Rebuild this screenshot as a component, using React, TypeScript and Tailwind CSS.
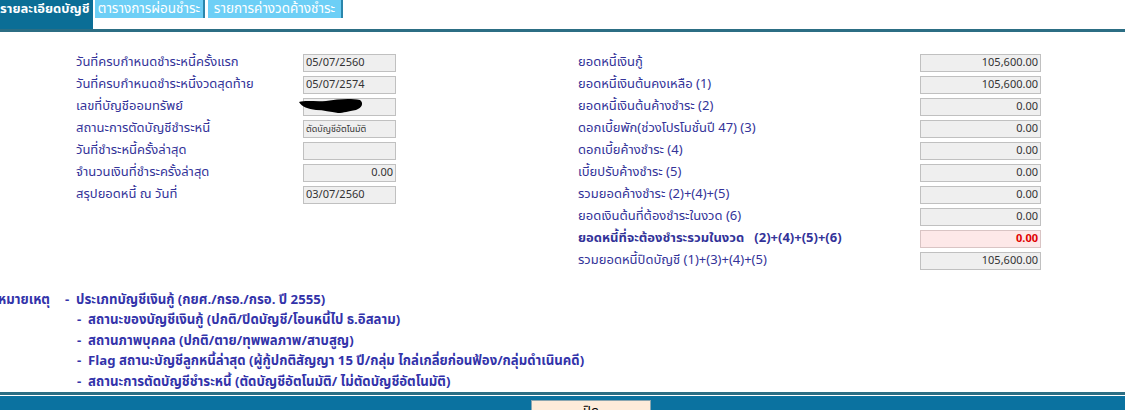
import React from 'react';

const leftRows: {label: string; value: string; align?: 'left' | 'right'; small?: boolean; redacted?: boolean}[] = [
  {label: 'วันที่ครบกำหนดชำระหนี้ครั้งแรก', value: '05/07/2560'},
  {label: 'วันที่ครบกำหนดชำระหนี้งวดสุดท้าย', value: '05/07/2574'},
  {label: 'เลขที่บัญชีออมทรัพย์', value: '', redacted: true},
  {label: 'สถานะการตัดบัญชีชำระหนี้', value: 'ตัดบัญชีอัตโนมัติ', small: true},
  {label: 'วันที่ชำระหนี้ครั้งล่าสุด', value: ''},
  {label: 'จำนวนเงินที่ชำระครั้งล่าสุด', value: '0.00', align: 'right'},
  {label: 'สรุปยอดหนี้ ณ วันที่', value: '03/07/2560'},
];

const rightRows: {label: string; value: string; highlight?: boolean}[] = [
  {label: 'ยอดหนี้เงินกู้', value: '105,600.00'},
  {label: 'ยอดหนี้เงินต้นคงเหลือ (1)', value: '105,600.00'},
  {label: 'ยอดหนี้เงินต้นค้างชำระ (2)', value: '0.00'},
  {label: 'ดอกเบี้ยพัก(ช่วงโปรโมชั่นปี 47) (3)', value: '0.00'},
  {label: 'ดอกเบี้ยค้างชำระ (4)', value: '0.00'},
  {label: 'เบี้ยปรับค้างชำระ (5)', value: '0.00'},
  {label: 'รวมยอดค้างชำระ (2)+(4)+(5)', value: '0.00'},
  {label: 'ยอดเงินต้นที่ต้องชำระในงวด (6)', value: '0.00'},
  {label: 'ยอดหนี้ที่จะต้องชำระรวมในงวด\u00a0\u00a0 (2)+(4)+(5)+(6)', value: '0.00', highlight: true},
  {label: 'รวมยอดหนี้ปิดบัญชี (1)+(3)+(4)+(5)', value: '105,600.00'},
];

const notes = [
  'สถานะของบัญชีเงินกู้ (ปกติ/ปิดบัญชี/โอนหนี้ไป ธ.อิสลาม)',
  'สถานภาพบุคคล (ปกติ/ตาย/ทุพพลภาพ/สาบสูญ)',
  'Flag สถานะบัญชีลูกหนี้ล่าสุด (ผู้กู้ปกติสัญญา 15 ปี/กลุ่ม ไกล่เกลี่ยก่อนฟ้อง/กลุ่มดำเนินคดี)',
  'สถานะการตัดบัญชีชำระหนี้ (ตัดบัญชีอัตโนมัติ/ ไม่ตัดบัญชีอัตโนมัติ)',
];

const font = "font-['Tahoma','Noto_Sans_Thai','Liberation_Sans',sans-serif]";

export default function App() {
  return (
    <div className={`w-[1125px] h-[410px] overflow-hidden bg-white ${font} flex flex-col`}>
      {/* tabs */}
      <div className="flex h-[29px] items-start">
        <div className="h-[29px] w-[93px] bg-[#0b6e96] text-white font-bold text-[13px] leading-[18px] whitespace-nowrap overflow-hidden">
          รายละเอียดบัญชี
        </div>
        <div className="h-[18px] w-[110px] ml-[2px] bg-[#6dcff6] border-r-2 border-[#2b86ab] text-white text-[13.5px] leading-[18px] whitespace-nowrap text-center">
          ตารางการผ่อนชำระ
        </div>
        <div className="h-[18px] w-[135px] ml-[3px] bg-[#6dcff6] border-r-2 border-[#2b86ab] text-white text-[13.5px] leading-[18px] whitespace-nowrap text-center">
          รายการค่างวดค้างชำระ
        </div>
      </div>
      <div className="h-[3px] bg-[#2c6e84]" />

      {/* body */}
      <div className="flex pt-[20px]">
        <div className="w-[578px] pl-[76px] flex flex-col">
          {leftRows.map((r) => (
            <div key={r.label} className="flex items-center h-[22px]">
              <span className="w-[227px] text-[13px] text-[#333399] whitespace-nowrap">{r.label}</span>
              <div
                className={`relative w-[93px] h-[18px] bg-[#efefef] border border-[#c0c0c0] px-[2px] leading-[16px] text-[#333] whitespace-nowrap overflow-visible ${
                  r.align === 'right' ? 'text-right' : 'text-left'
                } ${r.small ? 'text-[9px]' : 'text-[11px]'}`}
              >
                {r.redacted ? (
                  <svg className="absolute left-[-6px] top-[-2px]" width="70" height="20" viewBox="0 0 70 20">
                    <path
                      d="M1 5 C8 3 18 5 28 4 C40 2 52 1 62 3 C66 6 64 11 58 13 C50 14 46 16 40 16 C32 15 26 13 18 13 C10 12 4 10 1 5 Z"
                      fill="#000"
                    />
                  </svg>
                ) : (
                  r.value
                )}
              </div>
            </div>
          ))}
        </div>
        <div className="flex flex-col">
          {rightRows.map((r) => (
            <div key={r.label} className="flex items-center h-[22px]">
              <span
                className={`w-[342px] text-[13px] text-[#333399] whitespace-nowrap ${r.highlight ? 'font-bold' : ''}`}
              >
                {r.label}
              </span>
              <div
                className={`w-[121px] h-[18px] border px-[2px] text-[11px] leading-[16px] text-right whitespace-nowrap ${
                  r.highlight
                    ? 'bg-[#fde8e8] border-[#d9c4c4] text-[#e00000] font-bold'
                    : 'bg-[#efefef] border-[#c0c0c0] text-[#333]'
                }`}
              >
                {r.value}
              </div>
            </div>
          ))}
        </div>
      </div>

      {/* notes */}
      <div className="mt-[18px] flex flex-col text-[13.2px] font-bold text-[#3333aa] leading-[20.5px]">
        <div className="flex whitespace-nowrap">
          <span className="w-[67px] -ml-[2px]">หมายเหตุ</span>
          <span>-&nbsp; ประเภทบัญชีเงินกู้ (กยศ./กรอ./กรอ. ปี 2555)</span>
        </div>
        {notes.map((n) => (
          <div key={n} className="pl-[77px] whitespace-nowrap">
            -&nbsp; {n}
          </div>
        ))}
      </div>

      {/* bottom bar */}
      <div className="mt-auto h-[3px] bg-[#2c6e84] shrink-0" />
      <div className="h-[1px] bg-white shrink-0" />
      <div className="flex-1 bg-[#0b72a0] flex pl-[531px] pt-[4px] min-h-[14px]">
        <button className="w-[120px] h-[22px] bg-[#fdebd9] border border-[#8aa6b0] text-[13px] text-black leading-[18px]">
          ปิด
        </button>
      </div>
    </div>
  );
}
